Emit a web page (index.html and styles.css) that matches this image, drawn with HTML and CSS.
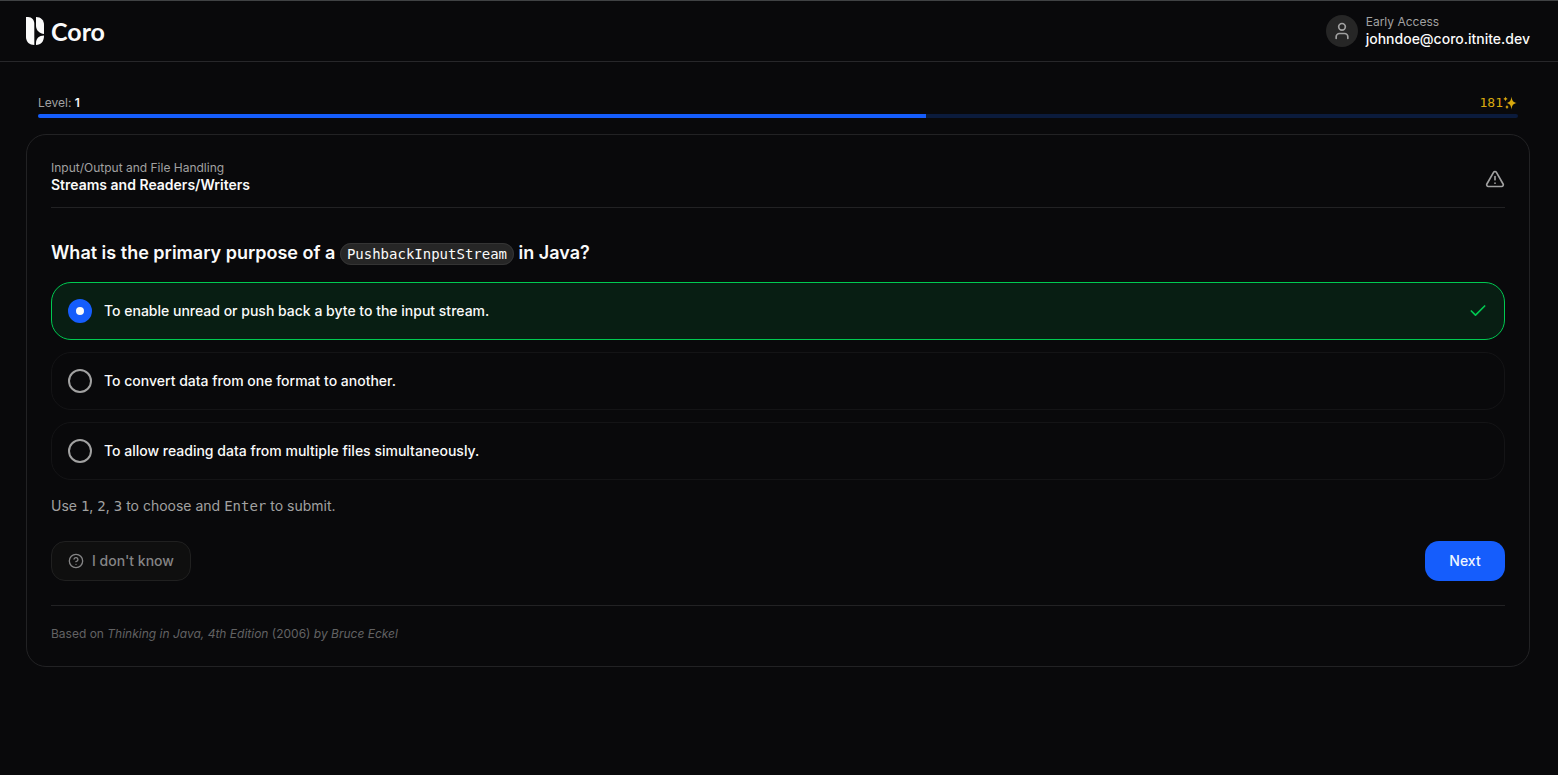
FILE: index.html
```html
<!DOCTYPE html>
<html lang="en">
<head>
  <meta charset="UTF-8" />
  <meta name="viewport" content="width=device-width, initial-scale=1.0"/>
  <title>Coro</title>
  <link rel="stylesheet" href="styles.css">
</head>
<body>

  <header class="topbar">
    <a class="brand" href="#">
      <svg class="brand-mark" viewBox="0 0 18 28" fill="currentColor" aria-hidden="true">
        <path d="M0 0H2C6 0 8.300 3 8.300 7V28C3.500 28 0 25 0 20Z"/>
        <path d="M10 0C15 0 18 3 18 8V17C14 16.500 10 13.500 10 9Z"/>
        <path d="M18 18.500C18 24.500 15 28 10 28V26C10 21.500 13 18.500 18 18.500Z"/>
      </svg>
      <span>Coro</span>
    </a>
    <div class="user">
      <span class="avatar">
        <svg class="icon" viewBox="0 0 24 24" aria-hidden="true">
          <path d="M19 21v-2a4 4 0 0 0-4-4H9a4 4 0 0 0-4 4v2"/>
          <circle cx="12" cy="7" r="4"/>
        </svg>
      </span>
      <div>
        <div class="label">Early Access</div>
        <div class="email">johndoe@coro.itnite.dev</div>
      </div>
    </div>
  </header>

  <main>
    <div class="level">
      <div class="level-row">
        <label for="level-progress">Level: <strong>1</strong></label>
        <span class="points">181<svg class="sparkles" viewBox="0 0 14 14" fill="currentColor" aria-hidden="true"><path d="M8.500 0.500C9 5 10.300 6.300 13.800 7C10.300 7.700 9 9 8.500 13.500C8 9 6.700 7.700 3.500 7C6.700 6.300 8 5 8.500 0.500Z"/><path d="M2.500 0.500C2.900 2 3.400 2.500 4.800 2.900C3.400 3.300 2.900 3.800 2.500 5.300C2.100 3.800 1.600 3.300 0.200 2.900C1.600 2.500 2.100 2 2.500 0.500Z"/><path d="M4 8.700C4.400 10.200 4.700 10.500 6 11C4.700 11.500 4.400 11.800 4 13.300C3.600 11.800 3.300 11.500 2 11C3.300 10.500 3.600 10.200 4 8.700Z"/></svg></span>
      </div>
      <progress id="level-progress" value="60" max="100"></progress>
    </div>

    <form class="card">
      <div class="card-header">
        <div class="topic">
          <div class="label">Input/Output and File Handling</div>
          <h2>Streams and Readers/Writers</h2>
        </div>
        <button class="report" type="button" aria-label="Report a problem">
          <svg class="icon" viewBox="0 0 24 24" aria-hidden="true">
            <path d="m21.730 18-8-14a2 2 0 0 0-3.480 0l-8 14A2 2 0 0 0 4 21h16a2 2 0 0 0 1.730-3"/>
            <path d="M12 9v4"/>
            <path d="M12 17h.01"/>
          </svg>
        </button>
      </div>

      <h1>What is the primary purpose of a <code>PushbackInputStream</code> in Java?</h1>

      <div class="options">
        <label class="option correct">
          <input type="radio" name="answer" value="1" checked>
          <span>To enable unread or push back a byte to the input stream.</span>
          <svg class="icon check" viewBox="0 0 24 24" aria-hidden="true">
            <path d="M20 6 9 17l-5-5"/>
          </svg>
        </label>
        <label class="option">
          <input type="radio" name="answer" value="2">
          <span>To convert data from one format to another.</span>
        </label>
        <label class="option">
          <input type="radio" name="answer" value="3">
          <span>To allow reading data from multiple files simultaneously.</span>
        </label>
      </div>

      <p class="hint">Use <kbd>1</kbd>, <kbd>2</kbd>, <kbd>3</kbd> to choose and <kbd>Enter</kbd> to submit.</p>

      <div class="actions">
        <button class="btn btn-ghost" type="button">
          <svg class="icon" viewBox="0 0 24 24" aria-hidden="true">
            <circle cx="12" cy="12" r="10"/>
            <path d="M9.090 9a3 3 0 0 1 5.830 1c0 2-3 3-3 3"/>
            <path d="M12 17h.01"/>
          </svg>
          I don't know
        </button>
        <button class="btn btn-primary" type="submit">Next</button>
      </div>

      <footer class="source">Based on <em>Thinking in Java, 4th Edition</em> (2006) <em>by Bruce Eckel</em></footer>
    </form>
  </main>

</body>
</html>
```
FILE: styles.css
```css
* {
  box-sizing: border-box;
}
body {
  font-family: Inter, sans-serif;
  font-size: 14px;
  line-height: 20px;
  background-color: #09090b;
  color: #fafafa;
  margin: 0;
}
h1, h2, p {
  margin: 0;
}
code, kbd {
  font-family: "DejaVu Sans Mono", monospace;
  font-size: 14px;
  line-height: 16px;
  font-weight: 400;
}
button {
  font: inherit;
  cursor: pointer;
}
.icon {
  width: 20px;
  height: 20px;
  fill: none;
  stroke: currentColor;
  stroke-width: 2;
  stroke-linecap: round;
  stroke-linejoin: round;
}
.label {
  font-size: 12px;
  line-height: 16px;
  color: #a1a1a1;
}

/* top bar */
.topbar {
  display: flex;
  align-items: center;
  justify-content: space-between;
  height: 62px;
  padding: 0 28px 0 26px;
  border-top: 1px solid #404244;
  border-bottom: 1px solid #27272a;
}
.brand {
  display: flex;
  align-items: center;
  gap: 7px;
  font-family: Lato, sans-serif;
  font-size: 25px;
  line-height: 28px;
  font-weight: 700;
  color: #fafafa;
  text-decoration: none;
}
.brand-mark {
  width: 18px;
  height: 28px;
}
.user {
  display: flex;
  align-items: center;
  gap: 8px;
}
.email {
  line-height: 18px;
  font-weight: 500;
}
.avatar {
  display: flex;
  align-items: center;
  justify-content: center;
  width: 32px;
  height: 32px;
  border-radius: 50%;
  background-color: #262626;
  color: #a1a1a1;
}

/* level */
main {
  padding: 32px 28px 32px 26px;
}
.level {
  padding: 0 12px;
  margin-bottom: 16px;
}
.level-row {
  display: flex;
  align-items: center;
  justify-content: space-between;
  height: 18px;
  margin-bottom: 2px;
  font-size: 12px;
  line-height: 16px;
  color: #a1a1a1;
}
.level-row strong {
  font-weight: 600;
  color: #fafafa;
}
.points {
  display: flex;
  align-items: center;
  padding-right: 1px;
  font-family: "DejaVu Sans Mono", monospace;
  font-size: 13px;
  color: #d9a90e;
}
.sparkles {
  width: 14px;
  height: 14px;
}
progress {
  display: block;
  appearance: none;
  width: 100%;
  height: 4px;
  border: none;
  border-radius: 2px;
  overflow: hidden;
  background-color: #0b1b3c;
}
progress::-webkit-progress-bar {
  background-color: #0b1b3c;
}
progress::-webkit-progress-value {
  background-color: #155dfc;
}

/* question card */
.card {
  border: 1px solid #222224;
  border-radius: 20px;
  padding: 24px;
}
.card-header {
  display: flex;
  align-items: flex-start;
  justify-content: space-between;
  padding-bottom: 8px;
  border-bottom: 1px solid #222224;
}
.topic {
  padding-top: 1px;
}
h2 {
  font-size: 14px;
  line-height: 18px;
  font-weight: 600;
}
.report {
  display: flex;
  align-items: center;
  height: 40px;
  padding: 0;
  border: none;
  background: none;
  color: #a1a1a1;
}
h1 {
  margin: 32px 0 16px;
  font-size: 18px;
  line-height: 26px;
  font-weight: 600;
}
h1 code {
  padding: 2px 6px;
  border: 1px solid #343434;
  border-radius: 12px;
  background-color: #262626;
}
.options {
  display: grid;
  gap: 12px;
}
.option {
  display: flex;
  align-items: center;
  gap: 12px;
  height: 58px;
  padding: 0 16px;
  border: 1px solid #141416;
  border-radius: 20px;
  font-weight: 500;
}
.option.correct {
  border-color: #00c951;
  background-color: #081e13;
}
.option input {
  appearance: none;
  width: 24px;
  height: 24px;
  margin: 0;
  border: 2px solid #a1a1a1;
  border-radius: 50%;
}
.option input:checked {
  border: 8px solid #155dfc;
  background-color: #fafafa;
}
.check {
  margin-left: auto;
  color: #00c951;
}
.hint {
  margin: 16px 0 25px;
  line-height: 20px;
  color: #a1a1a1;
}
.actions {
  display: flex;
  justify-content: space-between;
}
.btn {
  display: flex;
  align-items: center;
  justify-content: center;
  gap: 8px;
  height: 40px;
  border-radius: 14px;
  font-weight: 500;
}
.btn .icon {
  width: 16px;
  height: 16px;
}
.btn-ghost {
  padding: 0 16px;
  border: 1px solid #202020;
  background-color: #0f0f0f;
  color: #858586;
}
.btn-primary {
  min-width: 80px;
  padding: 0 24px;
  border: none;
  background-color: #155dfc;
  color: #eff6ff;
}
.source {
  margin-top: 24px;
  padding-top: 20px;
  border-top: 1px solid #222224;
  font-size: 12px;
  line-height: 16px;
  color: #626263;
}
```
